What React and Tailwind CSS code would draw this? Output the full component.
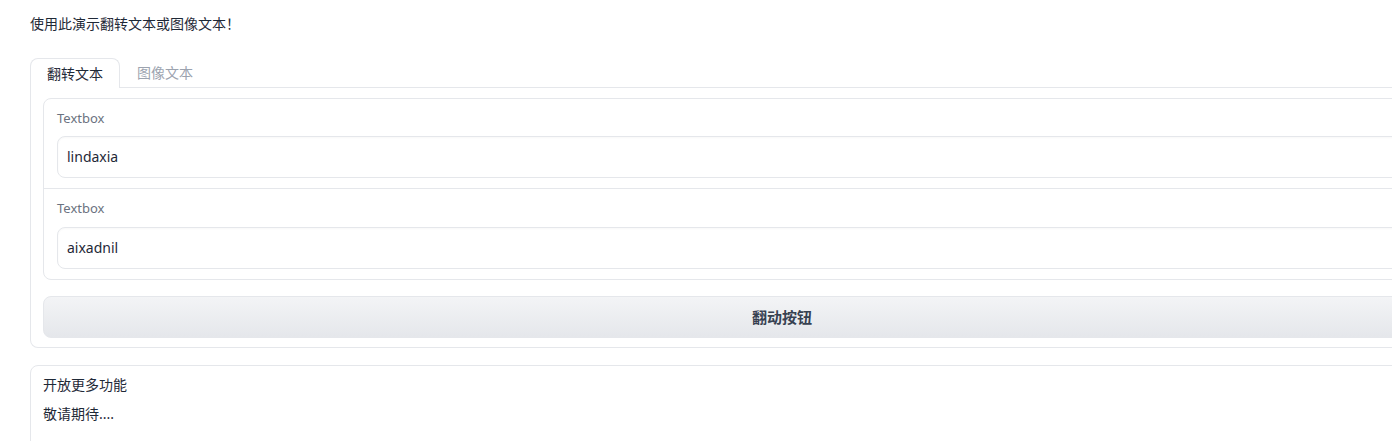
import React, { useState } from 'react';

const font = { fontFamily: '"Noto Sans", "Noto Sans CJK SC", sans-serif' };

function Field({ label, value, divider }) {
  return (
    <div className={`px-[13px] pt-[9px] pb-[10px] ${divider ? 'border-t border-[#e5e7eb]' : ''}`}>
      <div className="text-[13px] leading-5 text-[#6b7280]">{label}</div>
      <div className={`${divider ? 'mt-[9px] h-[42px]' : 'mt-[8px] h-[42px]'} rounded-lg border border-[#e5e7eb] bg-white flex items-center px-[9px] text-sm text-[#1f2937] shadow-[inset_0_1px_2px_rgba(0,0,0,0.03)]`}>
        {value}
      </div>
    </div>
  );
}

export default function App() {
  const [tab, setTab] = useState(0);

  return (
    <div className="w-[1392px] h-[441px] overflow-hidden bg-white" style={font}>
      <div className="w-[1504px] ml-[30px] pt-[14px]">
        <p className="text-sm leading-5 text-[#1f2937]">使用此演示翻转文本或图像文本！</p>

        <div className="mt-[24px]">
          <div className="flex border-b border-[#e5e7eb] h-[30px]">
            <button
              onClick={() => setTab(0)}
              className="h-[30px] px-4 text-sm text-[#1f2937] bg-white border border-b-0 border-[#e5e7eb] rounded-t-lg -mb-px relative z-10"
            >
              翻转文本
            </button>
            <button onClick={() => setTab(1)} className="h-[30px] px-[17px] text-sm text-[#9ca3af]">
              图像文本
            </button>
          </div>

          <div className="border-x border-b border-[#e5e7eb] rounded-b-lg px-3 pt-[10px] pb-[9px]">
            <div className="rounded-lg border border-[#e5e7eb]">
              <Field label="Textbox" value="lindaxia" />
              <Field label="Textbox" value="aixadnil" divider />
            </div>
            <button className="mt-4 w-full h-[42px] rounded-lg border border-[#e5e7eb] bg-gradient-to-b from-[#f3f4f6] to-[#e5e7eb] text-[15px] font-semibold text-[#374151]">
              翻动按钮
            </button>
          </div>
        </div>

        <div className="mt-[17px] rounded-lg border border-[#e5e7eb] px-3 pt-[9px] pb-6 text-sm leading-5 text-[#1f2937]">
          <p>开放更多功能</p>
          <p className="mt-[9px]">敬请期待....</p>
        </div>
      </div>
    </div>
  );
}
